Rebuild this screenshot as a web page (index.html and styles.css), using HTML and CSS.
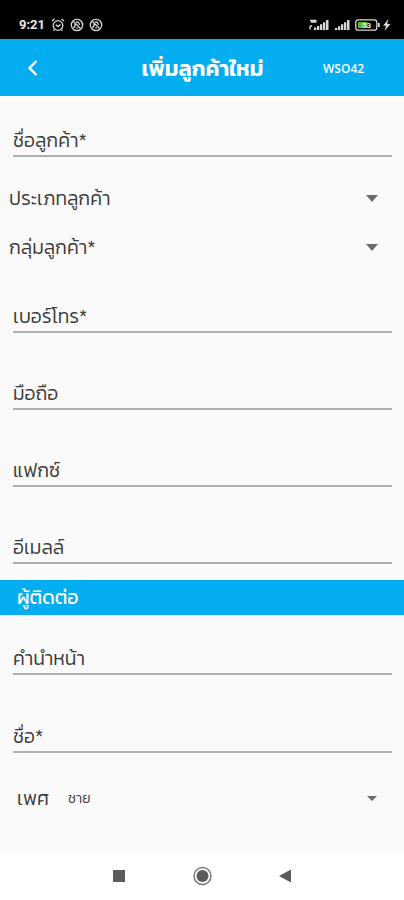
FILE: index.html
```html
<!DOCTYPE html>
<html lang="th">
<head>
<meta charset="utf-8">
<title>เพิ่มลูกค้าใหม่</title>
<link rel="stylesheet" href="styles.css">
</head>
<body>
<div class="status">
  <span class="clock">9:21</span>
  <svg class="alarm" width="14" height="14" viewBox="0 0 14 14"><circle cx="7" cy="7.5" r="4.8"/><path d="M1 3 3.5 1M13 3 10.500 1M4.800 6.800 7 8.600 9.500 6.500M3.500 11.500 2.500 13M10.500 11.500 11.500 13"/></svg>
  <svg class="ring" width="14" height="14" viewBox="0 0 14 14"><circle cx="7" cy="7" r="5.700"/><path d="M3.500 3.500 10.500 10.500M5.200 9.200H3.900L5 7.500V5.800M6 4.200C8 3.500 9.300 4.800 9.300 7M6.300 10.200H7.800"/></svg>
  <svg class="ring last" width="14" height="14" viewBox="0 0 14 14"><circle cx="7" cy="7" r="5.700"/><path d="M3.500 3.500 10.500 10.500M5.200 9.200H3.900L5 7.500V5.800M6 4.200C8 3.500 9.300 4.800 9.300 7M6.300 10.200H7.800"/></svg>
  <svg class="signals" width="84" height="14" viewBox="0 0 84 14">
    <path class="net" d="M2 2.500H8.500M3 4H8.500M2 8V11.500M2 8H4"/>
    <path class="bars" d="M6 12V9.500H8.300V12ZM9 12V8H11.300V12ZM12 12V6.200H14.300V12ZM15 12V4.200H17.300V12ZM18 12V2H20.500V12ZM27 12V10H29.300V12ZM30 12V8.200H32.300V12ZM33 12V6.200H35.300V12ZM36 12V4.200H38.300V12ZM39 12V2H41.500V12Z"/>
    <rect class="cell" x="47.800" y="1.800" width="21" height="10.400" rx="2.500"/>
    <rect class="charge" x="50" y="4" width="9.500" height="6"/>
    <path class="bars" d="M70 5H71.800V9H70ZM80.500 1 75 7.800H78L76.500 13 82.500 6H79.200Z"/>
    <text x="54" y="10" font-size="8">53</text>
  </svg>
</div>
<header class="appbar">
  <svg class="back" width="12" height="18" viewBox="0 0 12 18"><path d="M9.500 2 2.500 9 9.500 16"/></svg>
  <h1>เพิ่มลูกค้าใหม่</h1>
  <span class="code">WSO42</span>
</header>
<main>
  <div class="field first"><label>ชื่อลูกค้า*</label></div>
  <div class="select top"><span>ประเภทลูกค้า</span><i class="caret"></i></div>
  <div class="select"><span>กลุ่มลูกค้า*</span><i class="caret"></i></div>
  <div class="field phone"><label>เบอร์โทร*</label></div>
  <div class="field"><label>มือถือ</label></div>
  <div class="field"><label>แฟกซ์</label></div>
  <div class="field"><label>อีเมลล์</label></div>
  <h2>ผู้ติดต่อ</h2>
  <div class="field prefix"><label>คำนำหน้า</label></div>
  <div class="field"><label>ชื่อ*</label></div>
  <div class="gender"><span>เพศ</span><span class="value">ชาย</span><i class="caret small"></i></div>
</main>
<nav>
  <svg width="404" height="46" viewBox="0 0 404 46"><rect x="113" y="16" width="12" height="12"/><circle class="outer" cx="202.500" cy="22" r="8.500"/><circle cx="202.500" cy="22" r="6"/><path d="M279 22 291 15.500V28.500Z"/></svg>
</nav>
</body>
</html>
```
FILE: styles.css
```css
* { box-sizing: border-box; }
body { margin: 0; width: 404px; height: 900px; display: flex; flex-direction: column; background: #fafafa; color: #3a3a3a; font-family: "Kanit", "Prompt", monospace; font-size: 19.4px; font-weight: 300; overflow: hidden; }
.status { height: 39px; flex: none; background: #000; display: flex; align-items: center; padding: 10px 12px 0 19px; color: #e8e8e8; }
.clock { font: 700 13px Roboto, sans-serif; width: 32px; }
.status svg { fill: none; stroke: #d8d8d8; stroke-width: 1.300; }
.alarm { margin-right: 5px; }
.ring { margin-right: 5px; }
.signals { margin-left: auto; }
.status .bars { fill: #d8d8d8; stroke: none; }
.status .charge { fill: #55bd22; stroke: none; }
.status text { fill: #eee; stroke: none; font-family: Roboto, sans-serif; font-weight: 700; }
.appbar { height: 57px; flex: none; background: #03adef; color: #fff; display: grid; grid-template-columns: 82px 240px 82px; align-items: center; }
.back { margin-left: 27px; fill: none; stroke: #fff; stroke-width: 2.400; }
.appbar h1 { margin: 2px 0 0 1px; font-size: 22px; line-height: 30px; font-weight: 600; text-align: center; }
.code { font: 600 12px "Open Sans", sans-serif; padding: 2px 0 0 1px; }
main { flex: 1; }
.field { height: 77px; margin: 0 12px 0 13px; border-bottom: 2px solid #b0b0b0; display: flex; align-items: flex-end; line-height: 28px; }
.first { height: 61px; }
.phone { height: 61px; }
.prefix { height: 60px; }
.prefix + .field { height: 78px; }
.select { height: 49px; margin: 0 26px 0 9px; display: flex; align-items: center; justify-content: space-between; line-height: 30px; }
.top { margin-top: 17px; }
.caret { border: 6.5px solid transparent; border-top: 7px solid #6b6b6b; border-bottom: 0; }
.caret.small { border-width: 5px; border-bottom: 0; margin-left: auto; margin-right: 3px; }
h2 { margin: 16px 0 0; height: 35px; padding-left: 17px; background: #03adef; color: #fff; font-size: 19.5px; line-height: 36px; font-weight: 400; }
.gender { margin: 30px 24px 0 17px; height: 30px; display: flex; align-items: center; }
.value { margin-left: 19px; font-size: 14px; }
nav { height: 46px; flex: none; background: #fff; }
nav svg { display: block; fill: #5c5c5c; }
.outer { fill: none; stroke: #777; stroke-width: 1.500; }
```
